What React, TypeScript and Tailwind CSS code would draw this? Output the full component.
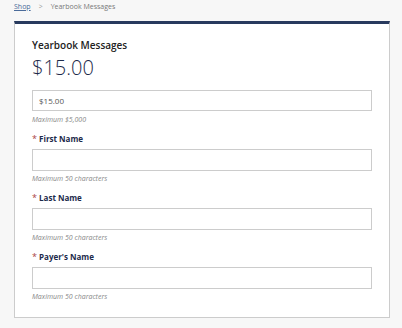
import React from "react";

const font = { fontFamily: '"Open Sans", "Liberation Sans", sans-serif' };

function Field({ label }: { label: string }) {
  return (
    <div className="mt-[8px]">
      <div className="text-[8px] leading-[12px] font-bold text-[#1c2a4a]">
        <span className="text-[#a94442] text-[9px] font-normal">*</span> {label}
      </div>
      <div className="mt-[4px] h-[22px] w-[340px] border border-[#cccccc] bg-white" />
      <div className="mt-[3px] text-[7px] leading-[10px] italic text-[#888888]">Maximum 50 characters</div>
    </div>
  );
}

export default function App() {
  return (
    <div className="min-h-[328px] w-[402px] bg-[#f7f7f7]" style={font}>
      <div className="flex items-center pl-[14px] h-[13px] text-[7px] leading-[13px] text-[#777777]">
        <span className="underline text-[#4a6b9a]">Shop</span>
        <span className="mx-[8px] text-[#999999]">&gt;</span>
        <span>Yearbook Messages</span>
      </div>
      <div className="mt-[8px] ml-[14px] w-[376px] h-[297px] bg-white border border-[#cccccc] border-t-[3px] border-t-[#283a5e] px-[17px] pt-[13px]">
        <div className="text-[10px] leading-[16px] font-semibold text-[#222222]">Yearbook Messages</div>
        <div className="mt-[3px] text-[20px] leading-[24px] font-light text-[#1c2a4a]">$15.00</div>
        <div className="mt-[10px] h-[21px] w-[340px] border border-[#cccccc] flex items-center pl-[6px] text-[8px] text-[#555555]">
          $15.00
        </div>
        <div className="mt-[4px] text-[7px] leading-[10px] italic text-[#888888]">Maximum $5,000</div>
        <Field label="First Name" />
        <Field label="Last Name" />
        <Field label="Payer's Name" />
      </div>
    </div>
  );
}
